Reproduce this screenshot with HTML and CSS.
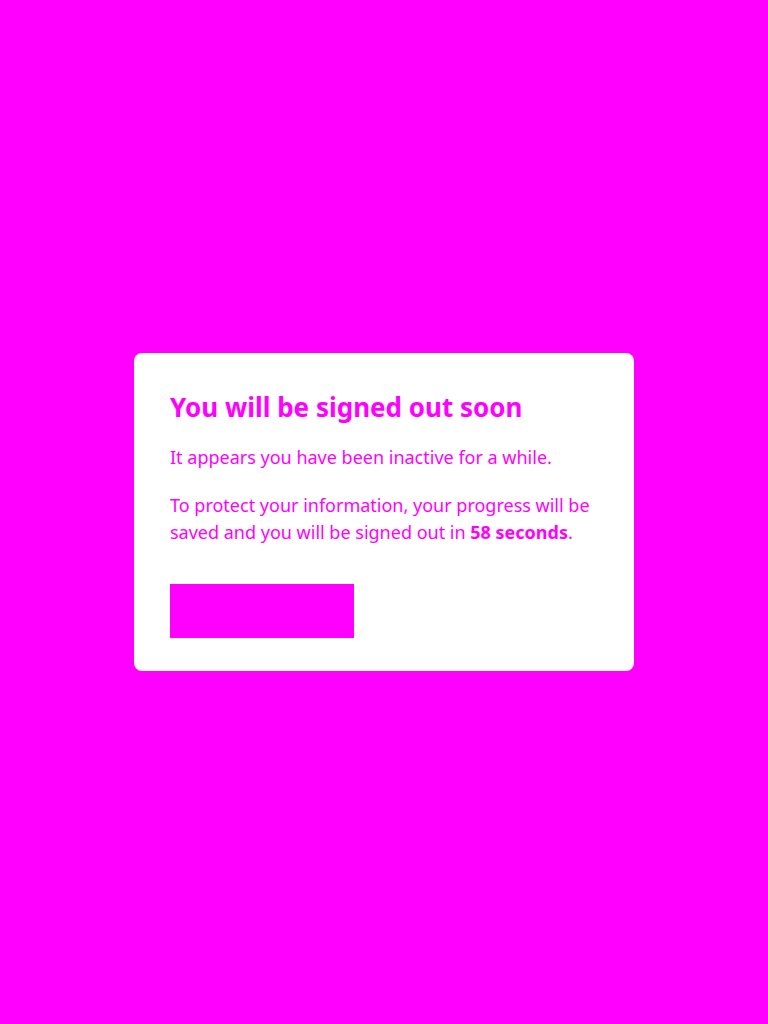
FILE: index.html
```html
<!DOCTYPE html>
<html lang="en">
<head>
<meta charset="utf-8">
<title>Signed out soon</title>
<link rel="stylesheet" href="styles.css">
</head>
<body>
<div class="overlay">
  <div class="dialog" role="dialog" aria-labelledby="t">
    <h1 id="t" class="title">You will be signed out soon</h1>
    <p class="text first">It appears you have been inactive for a while.</p>
    <p class="text">To protect your information, your progress will be saved and you will be signed out in <strong>58 seconds</strong>.</p>
    <button class="btn" type="button">Stay signed in</button>
  </div>
</div>
</body>
</html>
```
FILE: styles.css
```css
html, body {
  margin: 0;
  padding: 0;
  height: 100%;
}
body {
  background: #ff00ff;
  font-family: "Noto Sans", "DejaVu Sans", sans-serif;
  color: #ff00ff;
}
.overlay {
  height: 100%;
  display: flex;
  align-items: center;
  justify-content: center;
}
.dialog {
  width: 500px;
  box-sizing: border-box;
  background: #ffffff;
  border-radius: 8px;
  padding: 36px 36px 33px;
}
.title {
  margin: 0 0 19px;
  font-size: 26px;
  line-height: 36px;
  font-weight: 700;
}
.text {
  margin: 0;
  font-size: 18px;
  line-height: 27px;
}
.text.first {
  margin-bottom: 21px;
}
.text strong {
  font-weight: 700;
}
.btn {
  display: block;
  margin-top: 38px;
  width: 184px;
  height: 54px;
  border: 0;
  border-radius: 0;
  background: #ff00ff;
  color: #ff00ff;
  font-family: inherit;
  font-size: 18px;
  padding: 0;
}
```
